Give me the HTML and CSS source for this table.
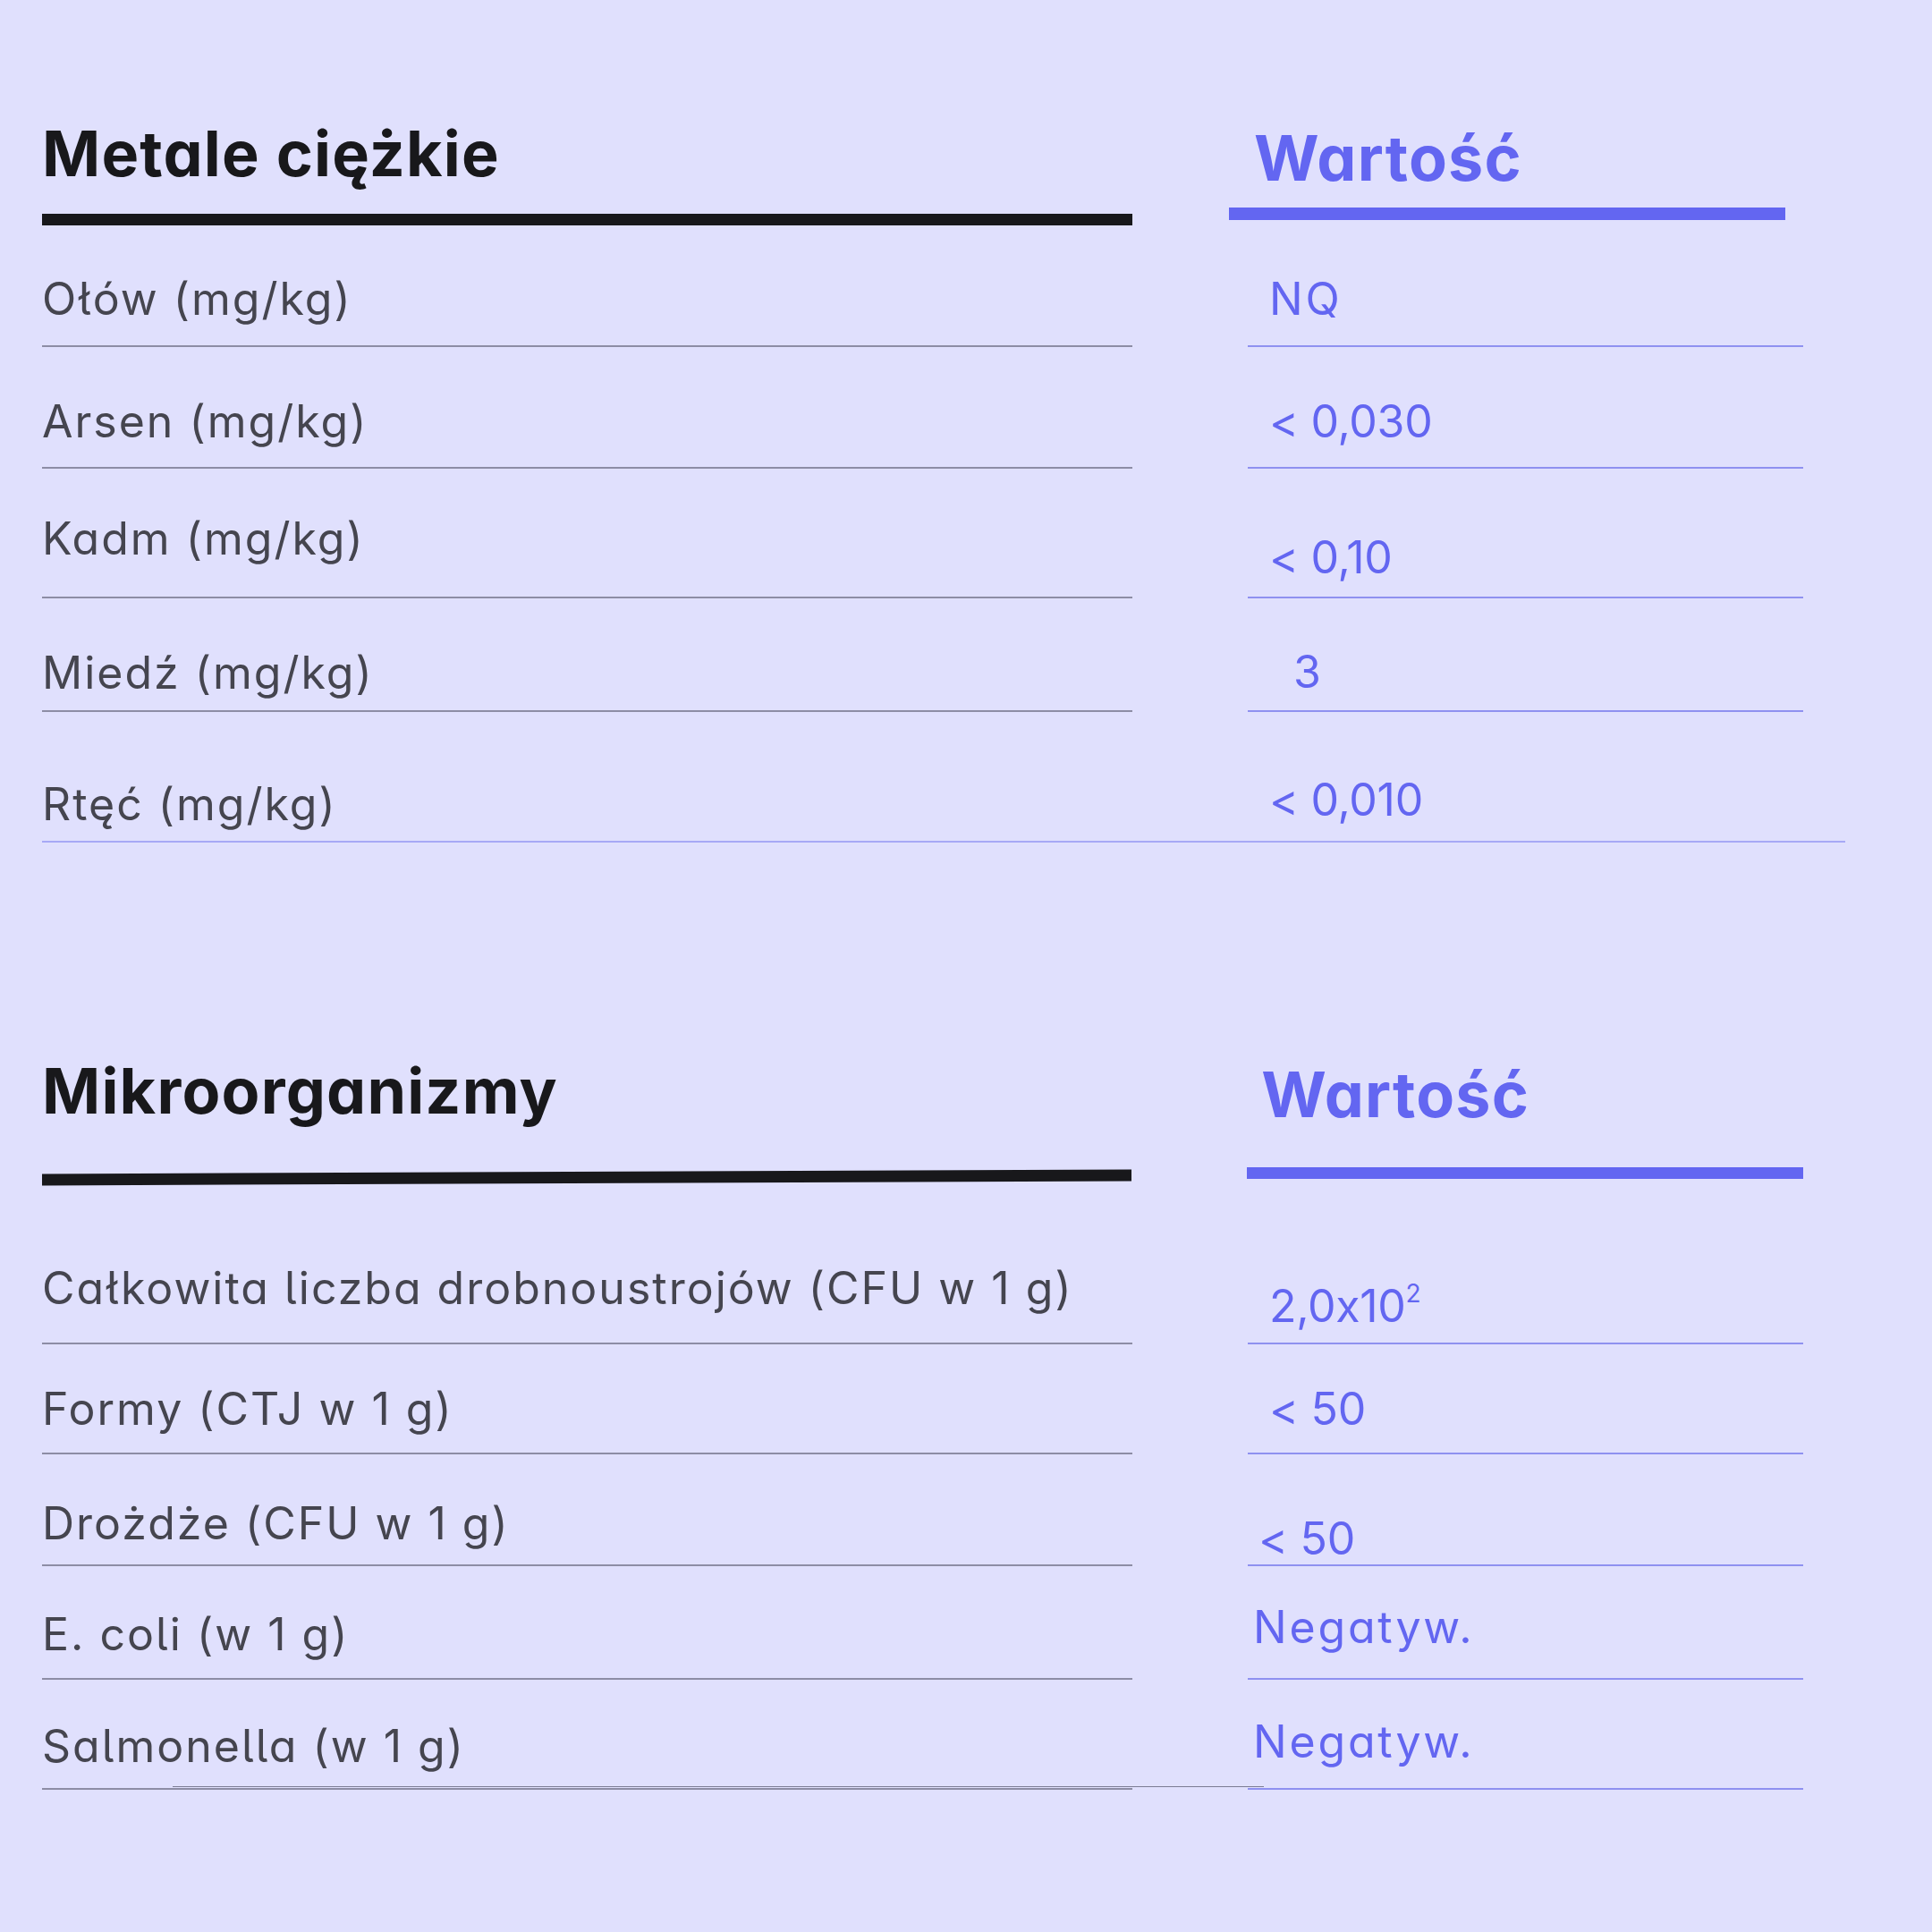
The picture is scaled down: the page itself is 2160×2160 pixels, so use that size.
FILE: index.html
```html
<!DOCTYPE html>
<html lang="pl">
<head>
<meta charset="utf-8">
<title>Metale ciężkie i mikroorganizmy</title>
<link rel="stylesheet" href="styles.css">
</head>
<body>
<main class="page">
  <section class="table t1">
    <div class="head">
      <div class="head-l">
        <h2 class="title">Metale ciężkie</h2>
        <div class="bar bar-black"></div>
      </div>
      <div class="head-r head-r1">
        <h2 class="title title-blue">Wartość</h2>
        <div class="bar bar-blue"></div>
      </div>
    </div>

    <div class="row h136">
      <div class="cl pt52">Ołów (mg/kg)</div>
      <div class="cr pt52 word">NQ</div>
    </div>
    <div class="row h136">
      <div class="cl pt53">Arsen (mg/kg)</div>
      <div class="cr pt53">&lt; 0,030</div>
    </div>
    <div class="row h145">
      <div class="cl pt48">Kadm (mg/kg)</div>
      <div class="cr pt69">&lt; 0,10</div>
    </div>
    <div class="row h127">
      <div class="cl pt53">Miedź (mg/kg)</div>
      <div class="cr pt52 indent">3</div>
    </div>
    <div class="row h146 row-full">
      <div class="cl pt73">Rtęć (mg/kg)</div>
      <div class="cr pt68">&lt; 0,010</div>
    </div>
  </section>

  <section class="table t2">
    <div class="head">
      <div class="head-l">
        <h2 class="title">Mikroorganizmy</h2>
        <div class="bar bar-black bar-tilt"></div>
      </div>
      <div class="head-r head-r2">
        <h2 class="title title-blue">Wartość</h2>
        <div class="bar bar-blue"></div>
      </div>
    </div>

    <div class="row h180">
      <div class="cl pt87">Całkowita liczba drobnoustrojów (CFU w 1 g)</div>
      <div class="cr pt107">2,0x10<span class="sup">2</span></div>
    </div>
    <div class="row h123">
      <div class="cl pt42">Formy (CTJ w 1 g)</div>
      <div class="cr pt42">&lt; 50</div>
    </div>
    <div class="row h125">
      <div class="cl pt47">Drożdże (CFU w 1 g)</div>
      <div class="cr pt64 shift-l">&lt; 50</div>
    </div>
    <div class="row h127">
      <div class="cl pt46">E. coli (w 1 g)</div>
      <div class="cr pt38 shift-ll word">Negatyw.</div>
    </div>
    <div class="row h123 row-last">
      <div class="cl pt44">Salmonella (w 1 g)</div>
      <div class="cr pt39 shift-ll word">Negatyw.</div>
    </div>
  </section>
</main>
</body>
</html>
```

FILE: styles.css
```css
* { box-sizing: border-box; }

html, body {
  margin: 0;
  padding: 0;
  background: #e0e0fd;
}

body {
  font-family: Inter, "Noto Sans", "DejaVu Sans", sans-serif;
  font-feature-settings: "cv11" 1;
  width: 2160px;
  height: 2160px;
  overflow: hidden;
}

.page {
  padding: 130px 0 0 47px;
}

.table { width: 1969px; }

.t2 { margin-top: 236px; }

.head {
  display: flex;
  align-items: flex-start;
}

.head-l { width: 1219px; }

.head-r { width: 622px; }

.head-r1 {
  margin-left: 108px;
  padding-top: 5px;
}
.head-r1 .title { padding-left: 28px; }
.head-r1 .bar { margin-top: 13px; height: 14px; }

.head-r2 {
  margin-left: 129px;
  padding-top: 4px;
}
.head-r2 .title { padding-left: 16px; }
.head-r2 .bar { margin-top: 39px; height: 13px; }

.title {
  margin: 0;
  font-size: 70px;
  line-height: 84px;
  font-weight: 700;
  color: #18181b;
  letter-spacing: 1.2px;
}

.title-blue { color: #6366f1; }

.bar { height: 13px; }

.bar-black {
  background: #18181b;
  margin-top: 25px;
}

.t2 .bar-black { margin-top: 48px; }

.bar-tilt { transform: rotate(-0.23deg); }

.bar-blue { background: #6366f1; }

.row {
  display: flex;
  font-size: 50px;
  line-height: 60px;
  font-feature-settings: "cv11" 1, "cv05" 1;
}

.cl {
  width: 1219px;
  color: #45454f;
  border-bottom: 2px solid #8d8da5;
  white-space: nowrap;
  letter-spacing: 2px;
}

.cr {
  width: 621px;
  margin-left: 129px;
  padding-left: 24px;
  color: #6366f1;
  border-bottom: 2px solid #8f91f0;
  white-space: nowrap;
  letter-spacing: -0.3px;
}

.word { letter-spacing: 2.8px; }

.indent { padding-left: 51px; }
.shift-l { padding-left: 12px; }
.shift-ll { padding-left: 6px; }

.row-full {
  width: 2016px;
  border-bottom: 2px solid #a7a9f6;
}
.row-full .cl,
.row-full .cr { border-bottom: 0; }

.row-last { position: relative; }
.row-last::after {
  content: "";
  position: absolute;
  left: 146px;
  bottom: 3px;
  width: 1220px;
  height: 1.5px;
  background: #7c7c94;
}

.sup {
  font-size: 28px;
  line-height: 0;
  vertical-align: 22px;
}

.h123 { height: 123px; }
.h125 { height: 125px; }
.h127 { height: 127px; }
.h136 { height: 136px; }
.h145 { height: 145px; }
.h146 { height: 146px; }
.h180 { height: 180px; }

.pt38 { padding-top: 38px; }
.pt39 { padding-top: 39px; }
.pt42 { padding-top: 42px; }
.pt44 { padding-top: 44px; }
.pt46 { padding-top: 46px; }
.pt47 { padding-top: 47px; }
.pt48 { padding-top: 48px; }
.pt52 { padding-top: 52px; }
.pt53 { padding-top: 53px; }
.pt64 { padding-top: 64px; }
.pt68 { padding-top: 68px; }
.pt69 { padding-top: 69px; }
.pt73 { padding-top: 73px; }
.pt87 { padding-top: 87px; }
.pt107 { padding-top: 107px; }
```
